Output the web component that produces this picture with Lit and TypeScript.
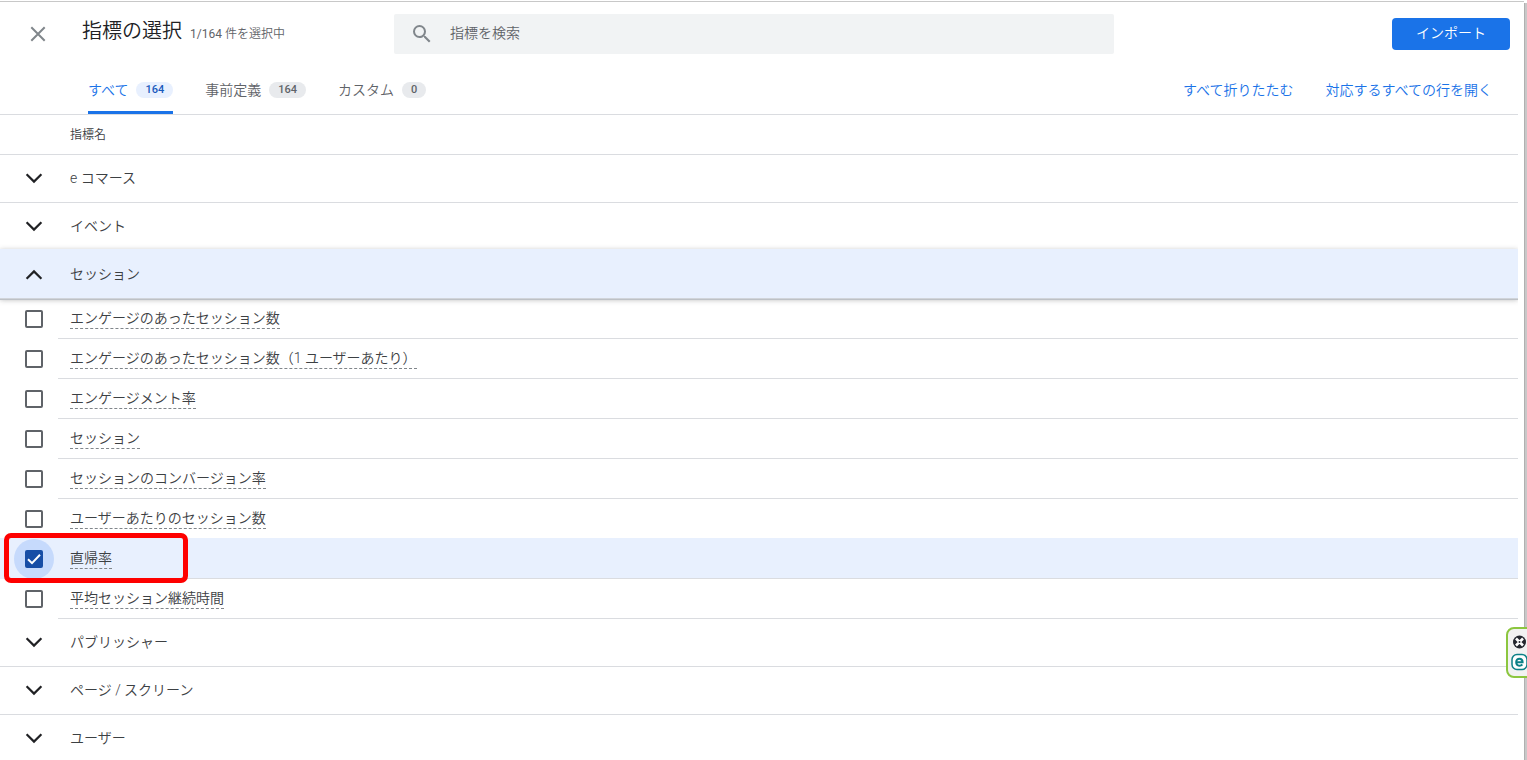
import { LitElement, html, css, svg, nothing } from "lit";
import { customElement, property, state } from "lit/decorators.js";

interface Metric {
  name: string;
  checked?: boolean;
  marked?: boolean;
}

interface Group {
  name: string;
  open?: boolean;
  metrics: Metric[];
}

const GROUPS: Group[] = [
  { name: "e コマース", metrics: [] },
  { name: "イベント", metrics: [] },
  {
    name: "セッション",
    open: true,
    metrics: [
      { name: "エンゲージのあったセッション数" },
      { name: "エンゲージのあったセッション数（1 ユーザーあたり）" },
      { name: "エンゲージメント率" },
      { name: "セッション" },
      { name: "セッションのコンバージョン率" },
      { name: "ユーザーあたりのセッション数" },
      { name: "直帰率", checked: true, marked: true },
      { name: "平均セッション継続時間" },
    ],
  },
  { name: "パブリッシャー", metrics: [] },
  { name: "ページ / スクリーン", metrics: [] },
  { name: "ユーザー", metrics: [] },
];

const TABS = [
  { label: "すべて", count: 164 },
  { label: "事前定義", count: 164 },
  { label: "カスタム", count: 0 },
];

@customElement("metric-row")
export class MetricRow extends LitElement {
  @property({ attribute: false }) metric!: Metric;

  static styles = css`
    :host {
      display: block;
    }
    .row {
      position: relative;
      display: grid;
      grid-template-columns: 58px 1fr;
      height: 40px;
    }
    .row.checked {
      background: #e8f0fe;
      box-shadow: 0 -1px #e8f0fe;
    }
    .box {
      display: grid;
      place-items: center;
      width: 40px;
      height: 40px;
      margin-left: 14px;
      border-radius: 50%;
    }
    .checked .box {
      background: #c6dafc;
    }
    .box > * {
      grid-area: 1 / 1;
    }
    input {
      appearance: none;
      width: 18px;
      height: 18px;
      margin: 0;
      border: 2px solid #5f6368;
      border-radius: 2px;
      background: #fff;
    }
    input:checked {
      border-color: #174ea6;
      background: #174ea6;
    }
    .tick {
      width: 18px;
      height: 18px;
      pointer-events: none;
    }
    .cell {
      display: flex;
      align-items: center;
      padding-left: 12px;
      border-bottom: 1px solid #dadce0;
    }
    label {
      line-height: 20px;
      border-bottom: 1px dashed #80868b;
    }
    .marker {
      position: absolute;
      left: 4px;
      top: -6px;
      width: 184px;
      height: 50px;
      box-sizing: border-box;
      border: 5px solid #fe0000;
      border-radius: 7px;
      z-index: 2;
      pointer-events: none;
    }
  `;

  private toggle(e: Event) {
    this.metric = { ...this.metric, checked: (e.target as HTMLInputElement).checked };
  }

  render() {
    const m = this.metric;
    return html`<div class="row ${m.checked ? "checked" : ""}">
      <div class="box">
        <input id="check" type="checkbox" .checked=${!!m.checked} @change=${this.toggle} />
        ${m.checked
          ? html`<svg class="tick" viewBox="0 0 18 18" fill="none" stroke="#fff" stroke-width="2">
              <path d="M3 9.3 L7 13.2 L15 4.8" />
            </svg>`
          : nothing}
      </div>
      <div class="cell"><label for="check">${m.name}</label></div>
      ${m.marked ? html`<div class="marker"></div>` : nothing}
    </div>`;
  }
}

@customElement("app-root")
export class AppRoot extends LitElement {
  @state() private groups = GROUPS;
  @state() private tab = 0;

  static styles = css`
    :host {
      display: grid;
      grid-template-columns: 1fr 3px;
      height: 100vh;
      box-sizing: border-box;
      padding-top: 1px;
      overflow: hidden;
      position: relative;
      background: #fff;
      color: #3c4043;
      font: 14px/20px Roboto, "Noto Sans CJK JP DemiLight", "Noto Sans CJK JP Light", "Noto Sans CJK JP", sans-serif;
      font-weight: 300;
    }
    button {
      font: inherit;
      color: inherit;
      border: 0;
      padding: 0;
      background: none;
      cursor: pointer;
    }
    .panel {
      min-width: 0;
      border-top: 1px solid #c8c8c8;
      padding-right: 6px;
    }
    .rail {
      margin-top: 2px;
      background: #c8c8c8;
      box-shadow: inset 1px 0 #b0b0b0;
    }
    .top {
      display: grid;
      grid-template-columns: 394px minmax(0, 720px) 1fr;
      align-items: center;
      padding-top: 12px;
    }
    .lead {
      display: flex;
      align-items: center;
      padding-left: 26px;
    }
    .close {
      display: grid;
      width: 24px;
      height: 24px;
      margin-right: 32px;
    }
    .heading {
      display: flex;
      align-items: baseline;
      gap: 8px;
      padding-bottom: 6px;
    }
    h1 {
      margin: 0;
      font-size: 20px;
      line-height: 28px;
      font-weight: 300;
      color: #202124;
    }
    .picked {
      font-size: 12px;
      font-weight: 400;
      color: #5f6368;
    }
    .search {
      display: flex;
      align-items: center;
      height: 40px;
      padding: 0 16px;
      gap: 16px;
      background: #f1f3f4;
      border-radius: 2px;
    }
    .search input {
      flex: 1;
      border: 0;
      outline: 0;
      padding: 0 0 2px;
      background: none;
      font: inherit;
    }
    .search input::placeholder {
      color: #5f6368;
      opacity: 1;
    }
    .import {
      justify-self: end;
      height: 32px;
      margin-right: 8px;
      padding: 0 24px 2px;
      border-radius: 4px;
      background: #1a73e8;
      color: #fff;
    }
    .bar {
      display: flex;
      justify-content: space-between;
      height: 60px;
      padding: 0 26px 0 88px;
      border-bottom: 1px solid #dadce0;
    }
    .tabs,
    .links {
      display: flex;
      gap: 32px;
      padding-top: 14px;
    }
    .tab {
      display: flex;
      align-items: center;
      gap: 8px;
      box-sizing: border-box;
      color: #5f6368;
      border-bottom: 3px solid transparent;
    }
    .count {
      padding: 0 9px;
      border-radius: 8px;
      background: #e8eaed;
      font-size: 11px;
      line-height: 16px;
      font-weight: 500;
    }
    .tab.on {
      color: #1a73e8;
      background: linear-gradient(#1a73e8, #1a73e8) bottom / 100% 3px no-repeat border-box;
    }
    .on .count {
      background: #e8f0fe;
      color: #185abc;
    }
    .links {
      align-items: center;
      padding-bottom: 3px;
    }
    .links a {
      color: #1a73e8;
      text-decoration: none;
    }
    .colhead {
      height: 39px;
      padding-left: 70px;
      font-size: 12px;
      line-height: 40px;
      border-bottom: 1px solid #dadce0;
      font-weight: 400;
    }
    .group {
      display: grid;
      grid-template-columns: 58px 1fr;
      align-items: center;
      width: 100%;
      height: 48px;
      text-align: left;
      box-sizing: border-box;
      border-bottom: 1px solid #dadce0;
    }
    .group svg {
      width: 24px;
      height: 24px;
      margin-left: 22px;
    }
    .group span {
      padding: 0 12px 2px;
    }
    .group.open {
      position: relative;
      z-index: 1;
      height: 50px;
      margin-top: -2px;
      padding-top: 2px;
      border-bottom-color: #d0d4da;
      background: #e8f0fe;
      box-shadow: 0 1px #bdc1c6, 0 1px 5px rgba(60, 64, 67, 0.35);
      clip-path: inset(-6px 0 -10px 0);
    }
    .widget {
      position: absolute;
      right: -8px;
      bottom: 82px;
      z-index: 3;
      display: grid;
      gap: 2px;
      padding: 4px 5px 5px 3px;
      border: 2px solid #8cc63f;
      border-radius: 8px;
      background: #f2f2f2;
    }
    .widget button {
      display: grid;
    }
    .widget svg {
      width: 17px;
      height: 18px;
    }
  `;

  private toggle(i: number) {
    this.groups = this.groups.map((g, n) => (n === i ? { ...g, open: !g.open } : g));
  }

  private setAll(e: Event, open: boolean) {
    e.preventDefault();
    this.groups = this.groups.map((g) => ({ ...g, open: open && g.metrics.length > 0 }));
  }

  private chevron(open?: boolean) {
    return html`<svg viewBox="0 0 24 24" fill="none" stroke="#202124" stroke-width="2.2">
      ${open ? svg`<path d="M4.6 15.8 L12 8.4 L19.4 15.8" />` : svg`<path d="M4.6 7.2 L12 14.6 L19.4 7.2" />`}
    </svg>`;
  }

  render() {
    return html`
      <main class="panel">
        <header class="top">
          <div class="lead">
            <button class="close" aria-label="閉じる">
              <svg viewBox="0 0 24 24" fill="none" stroke="#80868b" stroke-width="2">
                <path d="M5.3 5.3 L18.7 18.7 M18.7 5.3 L5.3 18.7" />
              </svg>
            </button>
            <div class="heading">
              <h1>指標の選択</h1>
              <span class="picked">1/164 件を選択中</span>
            </div>
          </div>
          <div class="search">
            <svg width="24" height="24" viewBox="0 0 24 24" fill="#80868b">
              <path
                d="M15.5 14h-.79l-.28-.27A6.47 6.47 0 0 0 16 9.5 6.5 6.5 0 1 0 9.5 16c1.61 0 3.09-.59 4.23-1.57l.27.28v.79l5 4.99L20.49 19l-4.99-5zm-6 0C7.01 14 5 11.99 5 9.5S7.01 5 9.5 5 14 7.01 14 9.5 11.99 14 9.5 14z"
              />
            </svg>
            <input type="text" aria-label="指標を検索" placeholder="指標を検索" />
          </div>
          <button class="import">インポート</button>
        </header>
        <div class="bar">
          <div class="tabs" role="tablist">
            ${TABS.map(
              (t, i) => html`<button
                class="tab ${i === this.tab ? "on" : ""}"
                role="tab"
                aria-selected=${i === this.tab}
                @click=${() => (this.tab = i)}
              >
                ${t.label}<span class="count">${t.count}</span>
              </button>`
            )}
          </div>
          <nav class="links">
            <a href="#" @click=${(e: Event) => this.setAll(e, false)}>すべて折りたたむ</a>
            <a href="#" @click=${(e: Event) => this.setAll(e, true)}>対応するすべての行を開く</a>
          </nav>
        </div>
        <div class="colhead">指標名</div>
        ${this.groups.map(
          (g, i) => html`<button
              class="group ${g.open ? "open" : ""}"
              aria-expanded=${!!g.open}
              @click=${() => this.toggle(i)}
            >
              ${this.chevron(g.open)}<span>${g.name}</span>
            </button>
            ${g.open ? g.metrics.map((m) => html`<metric-row .metric=${m}></metric-row>`) : nothing}`
        )}
      </main>
      <div class="rail"></div>
      <aside class="widget">
        <button aria-label="非表示">
          <svg viewBox="0 0 17 18">
            <circle cx="8.5" cy="9" r="6.5" fill="#24272e" />
            <path d="M5 5.5 L12 12.5 M12 5.5 L5 12.5" stroke="#fff" stroke-width="2.6" />
            <circle cx="8.5" cy="9" r="1" fill="#24272e" />
          </svg>
        </button>
        <button aria-label="開く">
          <svg viewBox="0 0 17 18" fill="none" stroke="#0b8086">
            <rect x="1" y="1.5" width="15" height="15" rx="5" fill="#fff" stroke-width="1.5" />
            <path d="M5.2 9.2 H11.6 C11.6 4.6 5.2 4.6 5.2 9.1 C5.2 13.4 9.4 13.4 11.4 11.6" stroke-width="2" />
          </svg>
        </button>
      </aside>
    `;
  }
}
